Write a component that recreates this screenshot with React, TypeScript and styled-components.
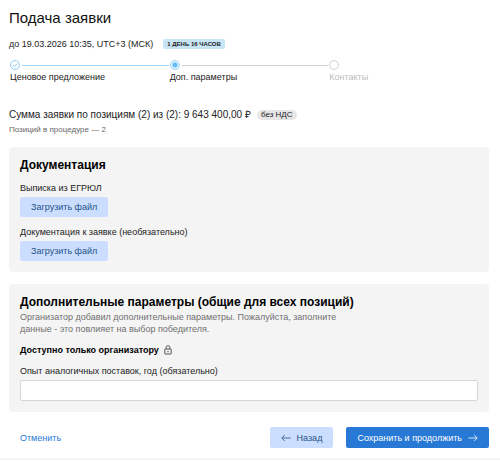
import React from "react";
import styled, { createGlobalStyle } from "styled-components";

const GlobalStyle = createGlobalStyle`
  *, *::before, *::after { box-sizing: border-box; }
  body {
    margin: 0;
    background: #fff;
    color: #222;
    font-family: "Liberation Sans", Arial, sans-serif;
    font-size: 9px;
    line-height: 12px;
  }
  h1, h2, h3, p, ol { margin: 0; padding: 0; }
  button, input { font: inherit; }
`;

const Page = styled.main`
  padding: 8px 11px 0 9px;
`;

const Title = styled.h1`
  font-size: 15px;
  line-height: 20px;
  font-weight: 400;
  color: #111;
`;

const Deadline = styled.div`
  display: flex;
  align-items: center;
  gap: 10px;
  margin-top: 10px;
`;

const TimeLeft = styled.span`
  padding: 0 4px;
  border-radius: 2px;
  background: #c7e5f5;
  font-size: 6px;
  line-height: 10px;
  font-weight: 700;
  text-transform: uppercase;
`;

const Steps = styled.ol`
  display: grid;
  grid-template-columns: repeat(3, 1fr);
  list-style: none;
  margin: 9px 0 0 1px;
`;

const StepItem = styled.li<{ $future?: boolean }>`
  color: ${(p) => (p.$future ? "#bdbdbd" : "#222")};
`;

const Track = styled.div`
  display: flex;
  align-items: center;
  gap: 2px;
  height: 12px;
  svg { display: block; flex: none; }
`;

const Line = styled.span<{ $done?: boolean }>`
  flex: 1;
  height: 1px;
  margin-right: 1px;
  background: ${(p) => (p.$done ? "#a4d5fa" : "#d2d2d2")};
`;

const Sum = styled.p`
  display: flex;
  align-items: center;
  gap: 6px;
  margin-top: 25px;
  font-size: 10px;
  line-height: 14px;
`;

const TaxTag = styled.span`
  padding: 0 4px;
  border-radius: 5px;
  background: #e6e6e6;
  font-size: 8px;
  line-height: 10px;
`;

const Note = styled.p`
  margin-top: 3px;
  font-size: 8px;
  line-height: 10px;
  color: #666;
`;

const Card = styled.section`
  margin-top: 12px;
  padding: 10px 11px 11px;
  border-radius: 4px;
  background: #f4f4f4;
`;

const CardTitle = styled.h2`
  font-size: 12px;
  line-height: 16px;
  font-weight: 700;
  color: #000;
`;

const Description = styled.p`
  max-width: 330px;
  margin-top: 1px;
  color: #707070;
`;

const Restricted = styled.h3`
  display: flex;
  align-items: center;
  gap: 5px;
  margin-top: 9px;
  font-size: 9px;
  font-weight: 700;
  color: #000;
`;

const Field = styled.div`
  display: flex;
  flex-direction: column;
  align-items: flex-start;
  gap: 3px;
  margin-top: 9px;
`;

const TextInput = styled.input`
  width: 100%;
  height: 21px;
  padding: 0 6px;
  border: 1px solid #d6d6d6;
  border-radius: 2px;
  background: #fff;
`;

const Button = styled.button<{ $primary?: boolean }>`
  display: inline-flex;
  align-items: center;
  justify-content: center;
  gap: 6px;
  height: 20px;
  padding: 0 11px;
  border: 0;
  border-radius: 2px;
  background: ${(p) => (p.$primary ? "#2878d5" : "#ccdeff")};
  color: ${(p) => (p.$primary ? "#fff" : "#265287")};
  cursor: pointer;
  white-space: nowrap;
`;

const Footer = styled.footer`
  display: flex;
  align-items: center;
  gap: 13px;
  padding: 15px 11px 10px 20px;
  border-bottom: 2px solid #f4f4f4;
  ${Button} { height: 21px; }
`;

const CancelLink = styled.a`
  margin-right: auto;
  color: #2878d5;
  text-decoration: none;
`;

function StepIcon({ state }: { state: "done" | "current" | "future" }) {
  const stroke = state === "future" ? "#cfcfcf" : "#8fcdfb";
  return (
    <svg width="10" height="10" viewBox="0 0 10 10" fill="none" aria-hidden="true">
      <circle cx="5" cy="5" r="4.4" stroke={stroke} />
      {state === "done" && <path d="M3 5.1 4.5 6.6 7.2 3.7" stroke={stroke} />}
      {state === "current" && <circle cx="5" cy="5" r="2.7" fill="#67bffa" />}
    </svg>
  );
}

function LockIcon() {
  return (
    <svg width="8" height="10" viewBox="0 0 8 10" fill="none" stroke="#444" strokeWidth="0.9" aria-label="Закрыто">
      <rect x="0.8" y="4" width="6.4" height="5" rx="0.6" />
      <path d="M2.1 4V2.6a1.9 1.9 0 0 1 3.8 0V4M4 5.8v1.5" />
    </svg>
  );
}

function Arrow({ back }: { back?: boolean }) {
  return (
    <svg width="10" height="8" viewBox="0 0 10 8" fill="none" stroke="currentColor" strokeWidth="0.8" aria-hidden="true">
      <path d={back ? "M9.6 4H.8M3.8 1 .8 4l3 3" : "M.4 4h8.8M6.2 1l3 3-3 3"} />
    </svg>
  );
}

function Upload({ id, label }: { id: string; label: string }) {
  return (
    <Field>
      <span id={id}>{label}</span>
      <Button type="button" aria-describedby={id}>Загрузить файл</Button>
    </Field>
  );
}

export default function App() {
  return (
    <>
      <GlobalStyle />
      <Page>
        <Title>Подача заявки</Title>
        <Deadline>
          <span>до 19.03.2026 10:35, UTC+3 (МСК)</span>
          <TimeLeft>1 день 16 часов</TimeLeft>
        </Deadline>
        <Steps>
          <StepItem>
            <Track><StepIcon state="done" /><Line $done /></Track>
            Ценовое предложение
          </StepItem>
          <StepItem aria-current="step">
            <Track><StepIcon state="current" /><Line /></Track>
            Доп. параметры
          </StepItem>
          <StepItem $future>
            <Track><StepIcon state="future" /></Track>
            Контакты
          </StepItem>
        </Steps>
        <Sum>
          <span>Сумма заявки по позициям (2) из (2): 9 643 400,00 ₽</span>
          <TaxTag>без НДС</TaxTag>
        </Sum>
        <Note>Позиций в процедуре — 2</Note>
        <Card>
          <CardTitle>Документация</CardTitle>
          <Upload id="registry" label="Выписка из ЕГРЮЛ" />
          <Upload id="documents" label="Документация к заявке (необязательно)" />
        </Card>
        <Card>
          <CardTitle>Дополнительные параметры (общие для всех позиций)</CardTitle>
          <Description>
            Организатор добавил дополнительные параметры. Пожалуйста, заполните данные - это повлияет на выбор победителя.
          </Description>
          <Restricted>Доступно только организатору <LockIcon /></Restricted>
          <Field>
            <label htmlFor="experience">Опыт аналогичных поставок, год (обязательно)</label>
            <TextInput id="experience" type="text" />
          </Field>
        </Card>
      </Page>
      <Footer>
        <CancelLink href="#cancel">Отменить</CancelLink>
        <Button type="button"><Arrow back />Назад</Button>
        <Button type="button" $primary>Сохранить и продолжить<Arrow /></Button>
      </Footer>
    </>
  );
}
